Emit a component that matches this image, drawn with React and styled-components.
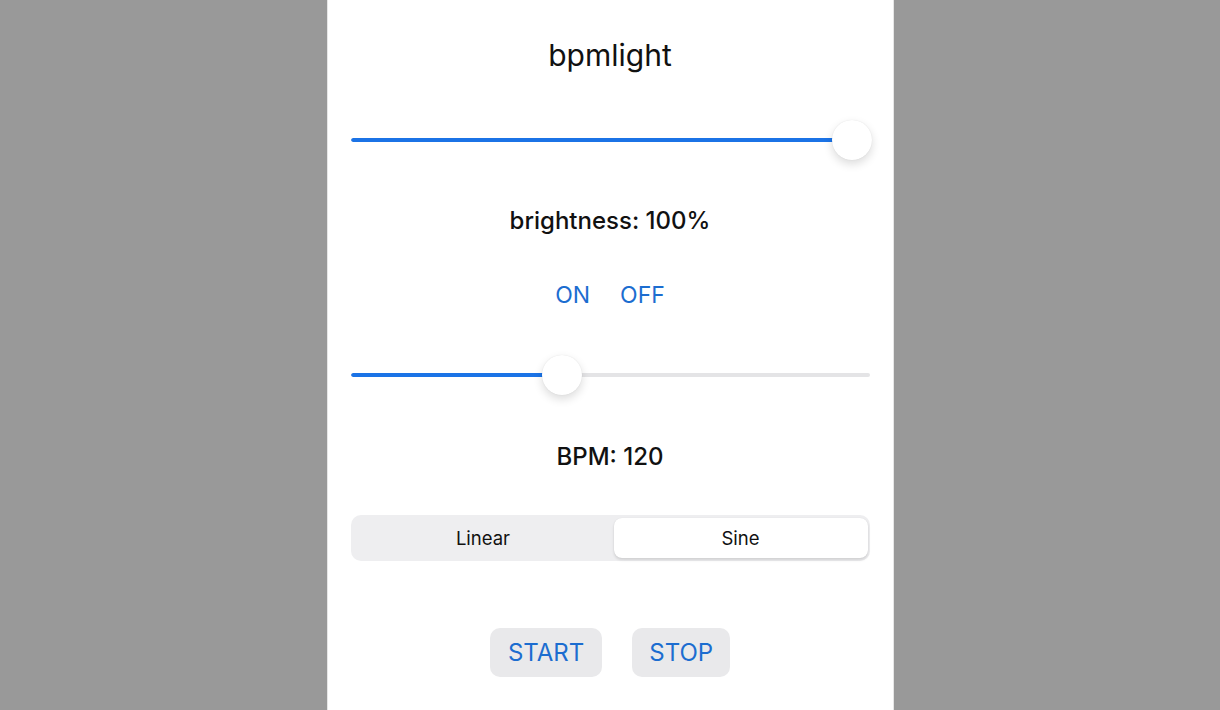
import React from "react";
import styled, { createGlobalStyle } from "styled-components";

const Global = createGlobalStyle`
  html, body { margin: 0; padding: 0; background: #999999; }
  body { font-family: Inter, "Noto Sans", sans-serif; -webkit-font-smoothing: antialiased; }
`;

const Page = styled.div`
  display: flex;
  justify-content: center;
  min-height: 710px;
  background: #999999;
`;

const Panel = styled.main`
  width: 567px;
  height: 710px;
  background: #ffffff;
  box-sizing: border-box;
  padding: 37px 24px 0 24px;
  display: flex;
  flex-direction: column;
  box-shadow: inset 1px 0 0 #e6e6e6, inset -1px 0 0 #e6e6e6;
`;

const Title = styled.h1`
  margin: 0;
  font-size: 30px;
  line-height: 36px;
  font-weight: 400;
  color: #111;
  text-align: center;
`;

const SliderWrap = styled.div`
  position: relative;
  height: 40px;
  margin-top: ${(p) => p.$mt}px;
  display: flex;
  align-items: center;
`;

const Track = styled.div`
  position: relative;
  width: 100%;
  height: 4px;
  border-radius: 2px;
  background: #e4e4e6;
  overflow: hidden;
`;

const Fill = styled.div`
  height: 100%;
  background: #1b73e6;
  border-radius: 2px;
`;

const Thumb = styled.div`
  position: absolute;
  top: 0;
  width: 40px;
  height: 40px;
  border-radius: 50%;
  background: #fff;
  box-shadow: 0 4px 10px rgba(0, 0, 0, 0.14), 0 0 1px rgba(0, 0, 0, 0.12);
  transform: translateX(-50%);
`;

const Label = styled.div`
  margin-top: ${(p) => p.$mt}px;
  font-size: 24px;
  line-height: 28px;
  font-weight: 500;
  color: #111;
  text-align: center;
`;

const ToggleRow = styled.div`
  margin-top: 46px;
  display: flex;
  justify-content: center;
  gap: 30px;
`;

const LinkButton = styled.button`
  border: 0;
  background: none;
  padding: 0;
  font-family: inherit;
  font-size: 23px;
  line-height: 28px;
  font-weight: 400;
  color: #1c6dd0;
`;

const Segmented = styled.div`
  margin-top: 44px;
  height: 46px;
  box-sizing: border-box;
  background: #eeeef0;
  border-radius: 10px;
  padding: 3px 2px;
  display: grid;
  grid-template-columns: 261fr 254fr;
`;

const Segment = styled.div`
  display: flex;
  align-items: center;
  justify-content: center;
  border-radius: 8px;
  font-size: 18.5px;
  font-weight: 400;
  color: #111;
  background: ${(p) => (p.$active ? "#ffffff" : "transparent")};
  box-shadow: ${(p) =>
    p.$active ? "0 2px 3px rgba(0,0,0,0.12), 0 0 1px rgba(0,0,0,0.1)" : "none"};
`;

const ButtonRow = styled.div`
  margin-top: 67px;
  display: flex;
  justify-content: center;
  gap: 30px;
`;

const Button = styled.button`
  height: 49px;
  padding: 0 ${(p) => p.$px}px;
  border: 0;
  border-radius: 10px;
  background: #e9e9eb;
  font-family: inherit;
  font-size: 24px;
  font-weight: 400;
  color: #1c6dd0;
`;

function Slider({ value, mt }) {
  const width = 519;
  const min = 18;
  const max = width - 18;
  const center = min + (max - min) * value;
  return (
    <SliderWrap $mt={mt}>
      <Track>
        <Fill style={{ width: `${center}px` }} />
      </Track>
      <Thumb style={{ left: `${center}px` }} />
    </SliderWrap>
  );
}

export default function App() {
  return (
    <>
      <Global />
      <Page>
        <Panel>
          <Title>bpmlight</Title>
          <Slider value={1} mt={47} />
          <Label $mt={47}>brightness: 100%</Label>
          <ToggleRow>
            <LinkButton>ON</LinkButton>
            <LinkButton>OFF</LinkButton>
          </ToggleRow>
          <Slider value={0.4} mt={46} />
          <Label $mt={48}>BPM: 120</Label>
          <Segmented>
            <Segment>Linear</Segment>
            <Segment $active>Sine</Segment>
          </Segmented>
          <ButtonRow>
            <Button $px={18}>START</Button>
            <Button $px={17}>STOP</Button>
          </ButtonRow>
        </Panel>
      </Page>
    </>
  );
}
